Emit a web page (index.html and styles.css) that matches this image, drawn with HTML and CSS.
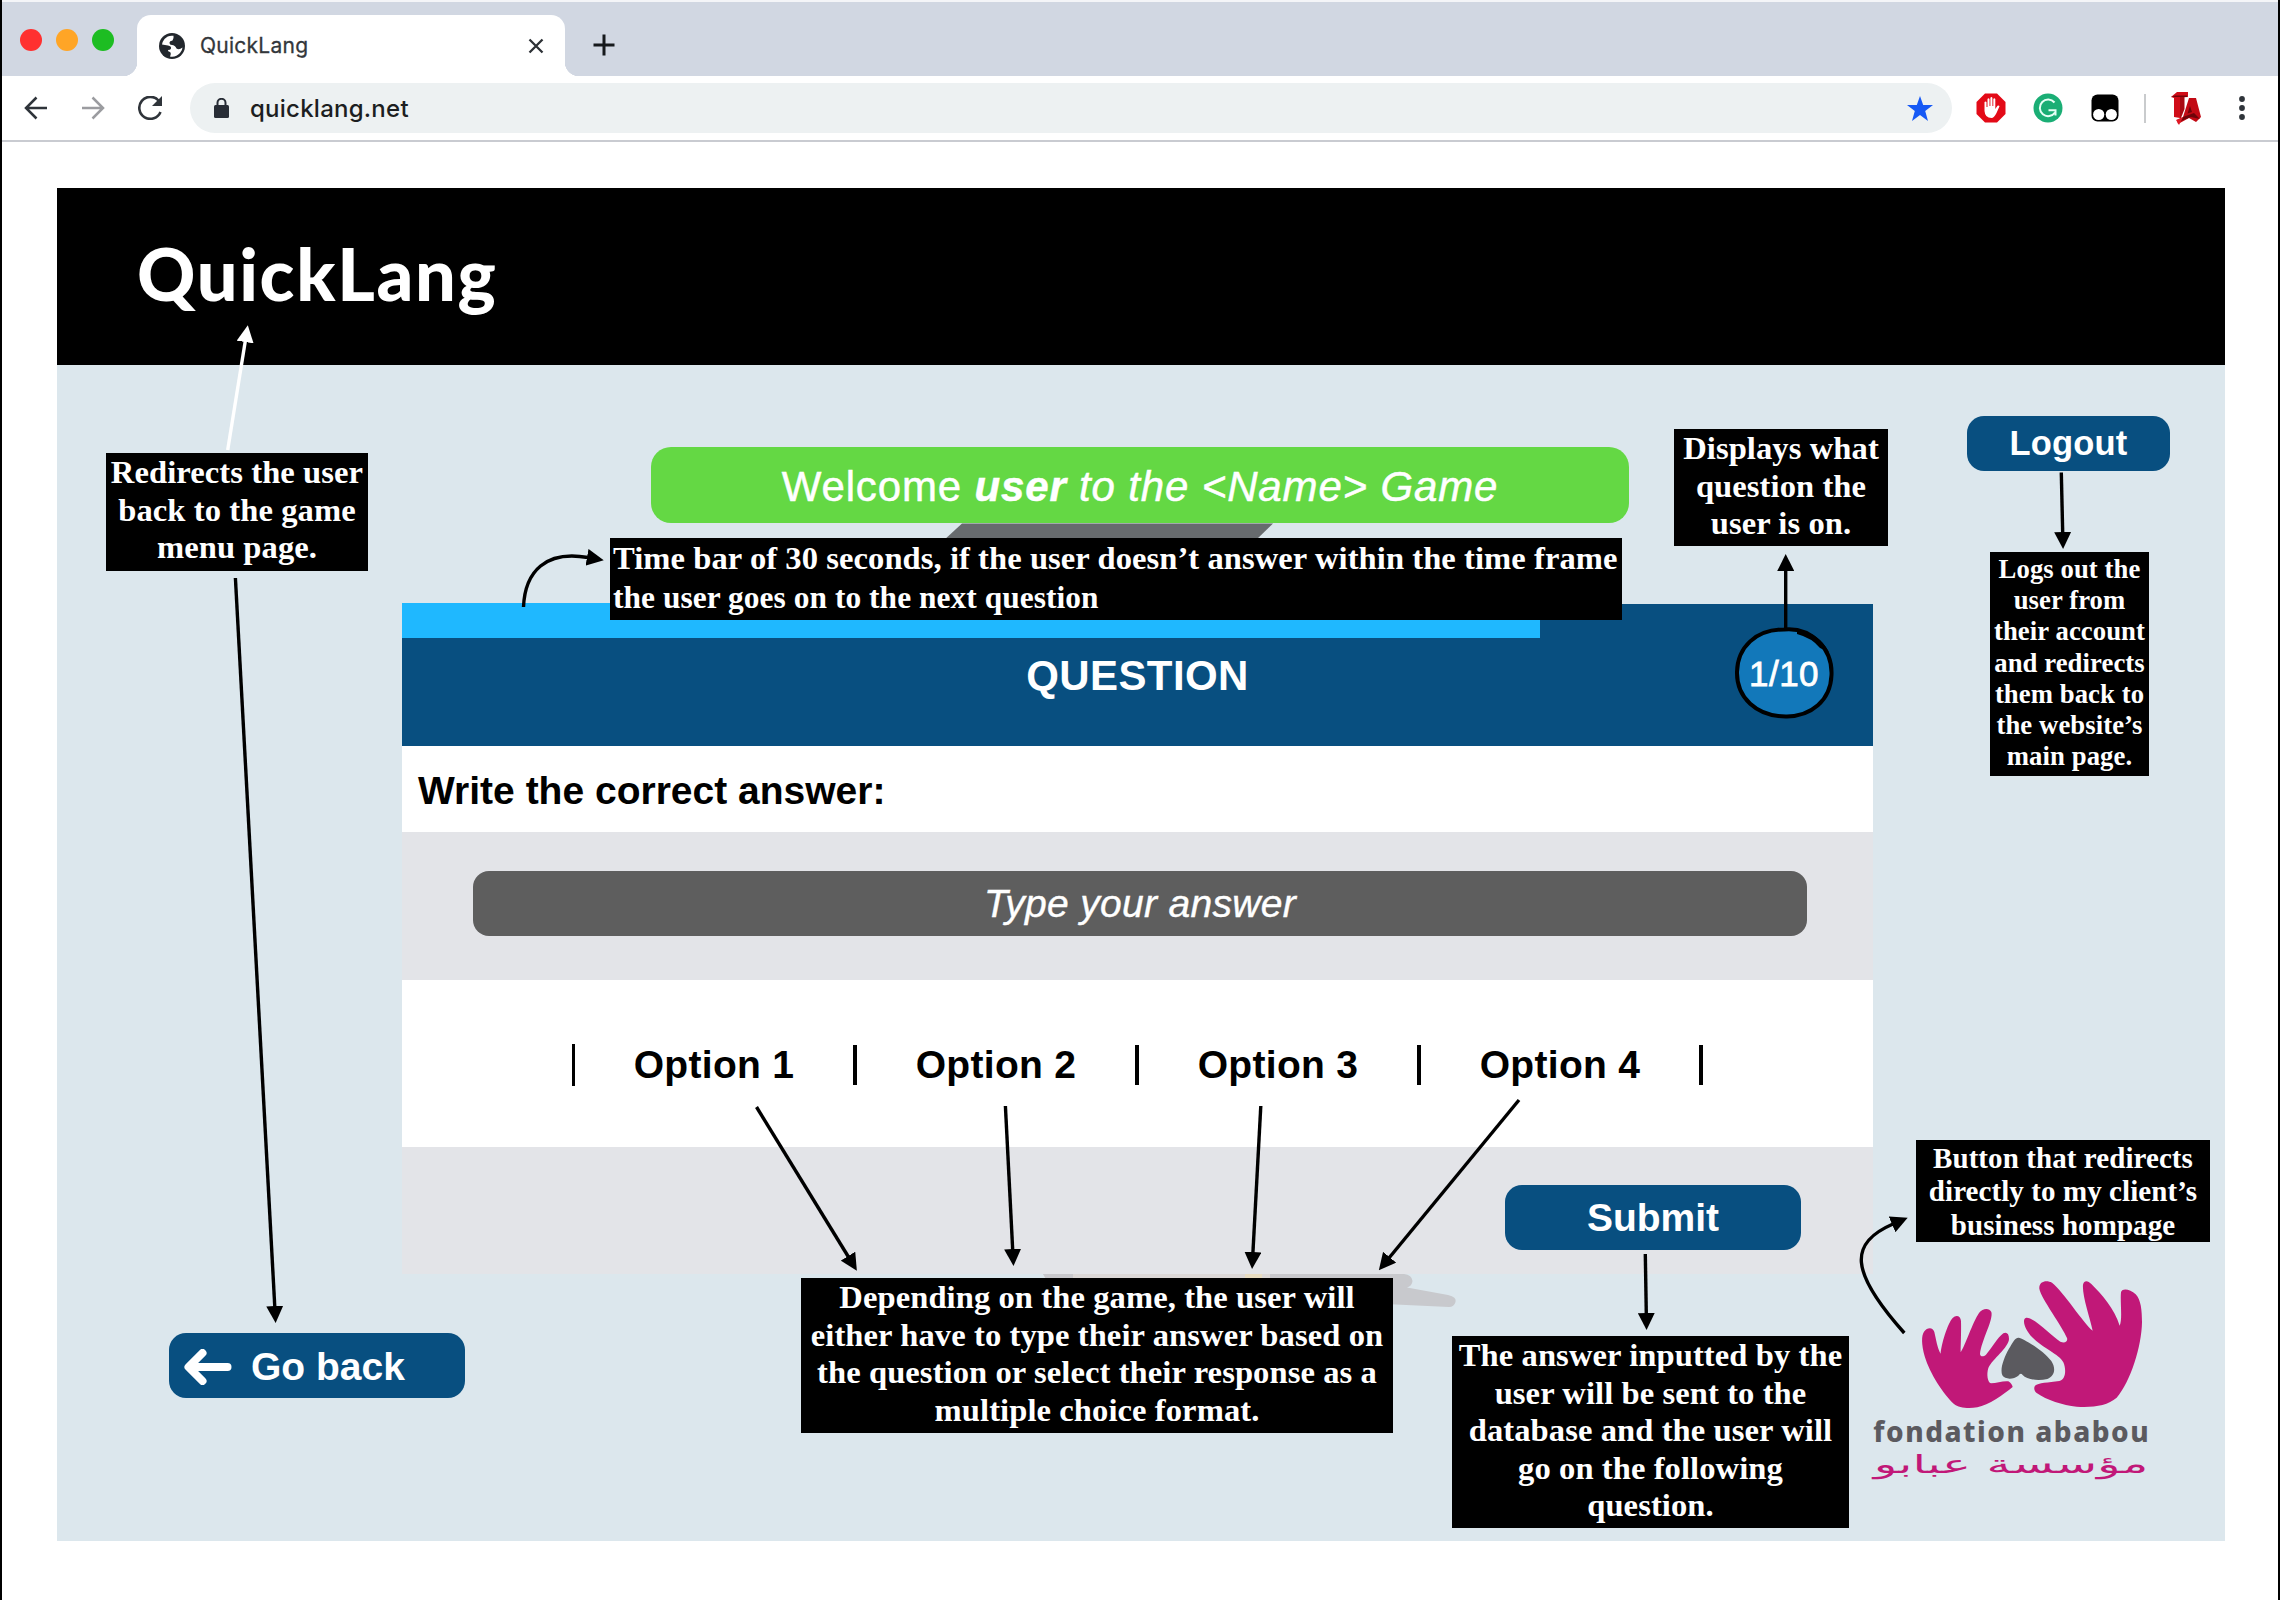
FILE: index.html
```html
<!DOCTYPE html>
<html lang="en">
<head>
<meta charset="utf-8">
<title>QuickLang</title>
<link rel="stylesheet" href="styles.css">
</head>
<body>
<div class="window">
  <div class="tabbar">
    <div class="lights"><i class="light red"></i><i class="light amber"></i><i class="light green"></i></div>
    <div class="tab">
      <svg class="globe" viewBox="0 0 26 26"><circle cx="13" cy="13" r="13" fill="#22272d"/><path d="M3 11.500L9 12.500Q12.500 13 12 15.500Q11.500 17 9 17Q8.500 18.500 11 19Q12.500 20 11 23.500Q17 24.500 21 20Q23.500 17 23.500 14.500Q20 17.500 17.500 15.500Q16 12 13 12Q10.500 12 10.500 9.500Q10.500 8 13.500 7.500Q15 5.500 14.500 2.800Q9 2 5.500 6Q3.500 8.500 3 11.500Z" fill="#fff"/></svg>
      <span class="tab-title">QuickLang</span>
      <svg class="close" viewBox="0 0 16 16"><path d="M1.500 1.500L14.500 14.500M14.500 1.500L1.500 14.500" stroke="#2d3136" stroke-width="2.300"/></svg>
    </div>
    <svg class="plus" viewBox="0 0 22 22"><path d="M11 0.500V21.500M0.500 11H21.500" stroke="#16191c" stroke-width="3"/></svg>
  </div>
  <div class="toolbar">
    <svg class="nav" viewBox="0 0 24 24"><path d="M23 12H2M12.500 1.500L2 12L12.500 22.500" fill="none" stroke="#2f343a" stroke-width="2.500"/></svg>
    <svg class="nav" viewBox="0 0 24 24"><path d="M1 12H22M11.500 1.500L22 12L11.500 22.500" fill="none" stroke="#9b9ca0" stroke-width="2.500"/></svg>
    <svg class="nav" viewBox="0 0 24 24"><path d="M20.500 4.500A11 11 0 1 0 22.500 16" fill="none" stroke="#2f343a" stroke-width="2.600"/><path d="M24 0V10H14Z" fill="#2f343a"/></svg>
    <div class="omnibox">
      <svg class="lock" viewBox="0 0 15 20"><rect x="0" y="7" width="15" height="13" rx="1.500" fill="#282d36"/><path d="M3.500 8V4.800a4 4 0 0 1 8 0V8" fill="none" stroke="#282d36" stroke-width="2"/></svg>
      <span class="url">quicklang.net</span>
      <svg class="star" viewBox="0 0 26 25"><path d="M13 0L16.200 9H26L18.200 15L21 25L13 19L5 25L7.800 15L0 9H9.800Z" fill="#1659f5"/></svg>
    </div>
    <div class="extensions">
      <svg class="ext" viewBox="0 0 30 30"><path d="M9 0.500H21L29.500 9V21L21 29.500H9L0.500 21V9Z" fill="#e30a17"/><path d="M8.500 9q1.200-1 2 0V14L11.500 14V6q1-1.500 2 0V13H14.400V4.800q1.100-1.500 2 0V13H17.300V6q1-1.500 2 0V16L21.500 12.700q1.500-.8 2 .5L20.500 20Q18 25 15.500 25Q9 25 8.500 18Z" fill="#fff"/></svg>
      <svg class="ext" viewBox="0 0 30 30"><circle cx="15" cy="15" r="14.500" fill="#1aae75"/><path d="M21.500 9.500A8.300 8.300 0 1 0 22 19.500M15.500 17.200H22.500V22.500" fill="none" stroke="#e6fff5" stroke-width="2"/></svg>
      <svg class="ext" viewBox="0 0 30 30"><rect x="1.500" y="1.500" width="27" height="27" rx="6" fill="#000"/><circle cx="8.700" cy="21.500" r="5.600" fill="#fff"/><circle cx="21.300" cy="21.500" r="5.600" fill="#fff"/></svg>
      <i class="divider"></i>
      <svg class="ta" viewBox="0 0 30 33"><path d="M0 5L6 0H17V5L9 5.500V26L3 25V6Z" fill="#d00d18"/><path d="M9 5H13.500V17L10 26H9Z" fill="#a80a12"/><path d="M0 5H16V3.500H4Z" fill="#75040a"/><path d="M18 6H25L30 25L25 30L18 26L7 32L6 28L12 25Z" fill="#c20a14"/><path d="M19 14L21 20L16.500 21.500ZM12 25L23 21L29 27L20 25L10 29Z" fill="#6d0409"/><path d="M5 28L12 25L8 33Z" fill="#e01824"/></svg>
      <svg class="dots" viewBox="0 0 6 26"><circle cx="3" cy="4" r="2.900"/><circle cx="3" cy="13" r="2.900"/><circle cx="3" cy="22" r="2.900"/></svg>
    </div>
  </div>
  <main class="page">
    <header class="masthead"><span class="brand">QuickLang</span></header>
    <div class="content">
      <div class="left">
        <div class="button back">
          <svg class="back-arrow" viewBox="0 0 48 36"><path d="M43.500 18H5M18.500 4L4.500 18L18.500 32" fill="none" stroke="#fff" stroke-width="8" stroke-linecap="round" stroke-linejoin="round"/></svg>
          <span>Go back</span>
        </div>
      </div>
      <div class="center">
        <div class="welcome"><span>Welcome <em><b>user</b> to the &lt;Name&gt; Game</em></span></div>
        <section class="panel">
          <div class="question">
            <div class="timebar"></div>
            <h1>QUESTION</h1>
          </div>
          <div class="prompt">Write the correct answer:</div>
          <div class="answer"><div class="field">Type your answer</div></div>
          <div class="options"><i class="bar thin"></i><span>Option 1</span><i class="bar"></i><span>Option 2</span><i class="bar"></i><span>Option 3</span><i class="bar"></i><span>Option 4</span><i class="bar"></i></div>
          <div class="actions"><div class="button submit">Submit</div></div>
        </section>
      </div>
      <div class="right">
        <div class="button logout">Logout</div>
        <svg class="logo" viewBox="0 0 900 660">
          <g fill="#c11878">
            <path d="M282 405C250 375 210 315 194 262C184 225 184 200 192 188C202 174 219 174 223 189C228 210 232 238 242 254C244 226 262 165 278 147C288 136 302 140 303 156C304 190 302 228 302 250C316 229 338 160 357 132C368 117 388 116 394 129C401 152 364 215 360 255C361 264 370 264 378 257C395 238 412 206 430 193C440 188 447 194 447 210C446 236 398 269 385 297C379 316 383 340 393 343C410 342 430 335 445 337C453 342 457 349 458 354C430 377 386 408 352 415C325 419 296 417 282 405Z"/>
            <path d="M525 350C535 341 565 341 598 336C618 332 619 300 610 280C598 255 548 238 516 204C496 183 485 153 497 147C518 141 572 199 601 218C616 225 624 215 621 207C608 173 543 88 538 59C536 36 560 32 576 41C612 70 668 160 698 185C689 143 666 80 669 47C673 31 685 36 694 45C724 74 764 120 779 170C788 151 780 98 783 69C788 56 811 61 827 76C843 92 846 125 846 160C845 230 812 339 770 386C742 410 700 416 650 413C608 409 560 393 530 372C522 366 521 356 525 350Z"/>
          </g>
          <path d="M476 206C490 208 551 245 574 276C588 298 585 320 562 330C534 336 500 332 488 318Q482 309 475 320C460 332 435 332 427 319C419 300 432 267 446 241C460 216 467 205 476 206Z" fill="#5b5a5f"/>
          <text class="logo-latin" x="40" y="520" textLength="826" lengthAdjust="spacing">fondation ababou</text>
          <text class="logo-arabic" x="453" y="612" textLength="824" lengthAdjust="spacingAndGlyphs" text-anchor="middle">مؤسسة عبابو</text>
        </svg>
      </div>
    </div>
  </main>

  <svg class="overlay" viewBox="0 0 2280 1600">
    <defs>
      <marker id="head" viewBox="0 0 17 17" refX="1" refY="8.500" markerWidth="17" markerHeight="17" markerUnits="userSpaceOnUse" orient="auto"><path d="M0 0L17 8.500L0 17Z"/></marker>
      <marker id="head-light" viewBox="0 0 17 17" refX="1" refY="8.500" markerWidth="17" markerHeight="17" markerUnits="userSpaceOnUse" orient="auto"><path d="M0 0L17 8.500L0 17Z" fill="#fff"/></marker>
    </defs>
    <path d="M962 523.500H1273L1255 541H943Z" fill="#676b6e"/>
    <path d="M1043 1274H1393V1279H1046Z" fill="#dbd7d6"/><path d="M1043 1274H1073V1279H1046ZM1270 1274H1393V1279H1270Z" fill="#c8c8cc"/><path d="M1245 1274H1262V1279H1245Z" fill="#e8dcc0"/>
    <path d="M1385 1274H1404Q1412 1275 1412.500 1281Q1412 1286 1407 1287.500L1448 1295Q1457 1297 1455.500 1302Q1454 1307 1449 1307L1385 1304Z" fill="#c8c9cd"/>
    <path class="badge" d="M1784 629.500C1799 628 1811 634 1819 642C1829 652 1832 663 1831.500 675C1830.500 701 1811 716 1787 716.500C1756 717 1736.500 697 1737 672C1737.500 647 1756 629.500 1784 629.500Z"/>
    <path d="M1797 630Q1818 632 1829 652L1820 648Q1812 638 1797 634Z"/>
    <text class="badge-text" x="1784" y="685.500" text-anchor="middle">1/10</text>
    <g class="arrows">
      <path class="light-arrow" d="M227.700 450L245.300 341"/>
      <path d="M235.400 578L274.800 1307"/>
      <path d="M523.500 607C525 571 546 550 588 557.500"/>
      <path d="M1785.700 629V570"/>
      <path d="M2061.300 472.500L2062.700 533"/>
      <path d="M756.500 1107L848.500 1257"/>
      <path d="M1005.400 1106L1012.700 1250"/>
      <path d="M1260.800 1106L1252.900 1253"/>
      <path d="M1519 1100L1389 1258"/>
      <path d="M1645.300 1254L1646.300 1314"/>
      <path d="M1904.300 1333C1849 1271 1849 1243 1893 1224"/>
    </g>
  </svg>

  <p class="note note-menu">Redirects the user<br>back to the game<br>menu page.</p>
  <p class="note note-time">Time bar of 30 seconds, if the user doesn’t answer within the time frame<br><span>the user goes on to the next question</span></p>
  <p class="note note-count">Displays what<br>question the<br>user is on.</p>
  <p class="note note-logout">Logs out the<br>user from<br>their account<br>and redirects<br>them back to<br>the website’s<br>main page.</p>
  <p class="note note-game">Depending on the game, the user will<br>either have to type their answer based on<br>the question or select their response as a<br>multiple choice format.</p>
  <p class="note note-submit">The answer inputted by the<br>user will be sent to the<br>database and the user will<br>go on the following<br>question.</p>
  <p class="note note-client">Button that redirects<br>directly to my client’s<br>business hompage</p>
</div>
</body>
</html>
```
FILE: styles.css
```css
* { box-sizing: border-box; }
body { margin: 0; font-family: "Liberation Sans", sans-serif; background: #fff; }
svg { display: block; flex: none; }
.window { position: relative; width: 2280px; height: 1600px; overflow: hidden; background: #fff; border-left: 2px solid #000; border-right: 2px solid #000; display: flex; flex-direction: column; }

.tabbar { height: 76px; flex: none; background: #d1d7e2; border-top: 2px solid #f4f5f8; display: flex; align-items: flex-end; padding-left: 18px; }
.lights { display: flex; gap: 14px; width: 117px; align-self: flex-start; padding-top: 27px; }
.light { width: 22px; height: 22px; border-radius: 50%; }
.red { background: #ff3030; }
.amber { background: #ffa526; }
.green { background: #1dbd22; }
.tab { position: relative; width: 428px; height: 61px; background: #fff; border-radius: 14px 14px 0 0; display: flex; align-items: center; padding: 0 21px 0 22px; }
.tab::before, .tab::after { content: ""; position: absolute; bottom: 0; width: 14px; height: 14px; }
.tab::before { left: -14px; background: radial-gradient(circle at 0 0, transparent 14px, #fff 14.5px); }
.tab::after { right: -14px; background: radial-gradient(circle at 100% 0, transparent 14px, #fff 14.5px); }
.globe { width: 26px; height: 26px; }
.tab-title { font: 21px/26px Inter, sans-serif; color: #33373b; margin-left: 15px; letter-spacing: 0.25px; flex: 1; -webkit-text-stroke: 0.3px #33373b; }
.close { width: 16px; height: 16px; }
.plus { width: 22px; height: 22px; margin: 0 0 20px 28px; }

.toolbar { height: 66px; flex: none; border-bottom: 2px solid #c9cbd1; display: flex; align-items: center; padding: 0 33px 0 22px; }
.nav { width: 24px; height: 24px; margin-right: 33px; }
.nav:nth-child(3) { margin: 0 28px 0 0; }
.omnibox { width: 1762px; height: 50px; flex: none; border-radius: 25px; background: #edf1f2; display: flex; align-items: center; padding: 0 19px 0 24px; }
.lock { width: 15px; height: 20px; }
.url { font: 500 24px/30px Inter, sans-serif; color: #1c1e21; margin-left: 21px; padding-top: 1px; flex: 1; letter-spacing: 0.25px; }
.star { width: 26px; height: 25px; }
.extensions { display: flex; align-items: center; flex: 1; margin-left: 24px; }
.ext { width: 30px; height: 30px; margin-right: 27px; }
.divider { width: 2px; height: 29px; background: #c9cbcd; margin-left: -3px; }
.ta { width: 30px; height: 33px; margin-left: 25px; }
.dots { width: 6px; height: 26px; margin-left: 38px; fill: #2f343a; }

.page { width: 2168px; margin: 46px 0 0 55px; flex: none; }
.masthead { height: 177px; background: #000; color: #fff; padding: 42px 0 0 80px; }
.brand { display: block; font: 900 72px/86px Lato, sans-serif; letter-spacing: 1.7px; white-space: nowrap; }
.content { height: 1176px; background: #dce7ed; display: grid; grid-template-columns: 345px 1471px 352px; }
.left { display: flex; flex-direction: column; justify-content: flex-end; padding: 0 0 143px 112px; }
.button { background: #084f80; color: #fff; font-weight: bold; font-size: 39px; border-radius: 17px; height: 65px; width: 296px; display: flex; align-items: center; justify-content: center; white-space: nowrap; }
.back { justify-content: flex-start; padding: 2px 0 0 15px; gap: 19px; }
.back-arrow { width: 48px; height: 36px; }
.center { display: flex; flex-direction: column; }
.welcome { margin: 82px 0 0 249px; width: 978px; height: 76px; border-radius: 20px; background: #64d844; color: #fff; font-size: 42px; display: flex; align-items: center; justify-content: center; padding: 3px 0 0; white-space: nowrap; letter-spacing: 0.85px; -webkit-text-stroke: 0.5px #fff; }
.panel { margin-top: 81px; display: flex; flex-direction: column; background: #fff; }
.question { height: 142px; background: #084f80; }
.timebar { width: 1138px; height: 35px; margin-top: -1px; background: #1fb8ff; }
.question h1 { margin: 14px 0 0; color: #fff; text-align: center; font-size: 42px; line-height: 48px; letter-spacing: 0.4px; }
.prompt { height: 86px; padding: 0 0 0 16px; font-weight: bold; font-size: 39px; line-height: 89px; }
.answer { height: 148px; background: #e3e4e8; padding: 39px 66px 0 71px; }
.field { height: 65px; border-radius: 16px; background: #5e5e5e; color: #fff; font-style: italic; font-size: 39px; line-height: 66px; text-align: center; letter-spacing: 0.3px; -webkit-text-stroke: 0.4px #fff; }
.options { height: 167px; display: flex; align-items: center; padding: 2px 0 0 170px; font-weight: bold; font-size: 39px; letter-spacing: 0.3px; }
.options span { width: 278px; text-align: center; }
.bar { width: 4px; height: 40px; background: #000; }
.thin { width: 3px; height: 42px; }
.actions { height: 127px; background: #e3e4e8; display: flex; justify-content: flex-end; padding: 38px 72px 0 0; }
.right { display: flex; flex-direction: column; justify-content: space-between; padding: 51px 0 52px; }
.logout { width: 203px; height: 55px; margin-left: 94px; font-size: 34.5px; letter-spacing: 0.2px; }
.logo { width: 300px; height: 220px; margin-left: -13px; }
.logo-latin { font: 800 84px "Noto Sans", "Open Sans", sans-serif; font-variant-ligatures: none; fill: #5b5a5f; }
.logo-arabic { font: 76px "DejaVu Sans", sans-serif; fill: #c11878; }

.overlay { position: absolute; left: -2px; top: 0; width: 2280px; height: 1600px; }
.arrows path { fill: none; stroke: #000; stroke-width: 3.4; marker-end: url(#head); }
.arrows .light-arrow { stroke: #fff; marker-end: url(#head-light); }
.badge { fill: #1278ba; stroke: #000; stroke-width: 4; }
.badge-text { font: 35px "Liberation Sans", sans-serif; fill: #fff; stroke: #fff; stroke-width: 0.8px; letter-spacing: 0.5px; }

.note { position: absolute; margin: 0; background: #000; color: #fff; font: bold 32.6px/37.5px "Liberation Serif", serif; letter-spacing: 0.08px; text-align: center; white-space: nowrap; padding-top: 1px; }
.note-menu { left: 104px; top: 453px; width: 262px; height: 118px; }
.note-time { left: 608px; top: 538px; width: 1012px; height: 82px; padding: 1px 0 0 3px; text-align: left; line-height: 39px; letter-spacing: 0.06px; }
.note-time span { font-size: 31.4px; }
.note-count { left: 1672px; top: 429px; width: 214px; height: 117px; }
.note-logout { left: 1988px; top: 552px; width: 159px; height: 224px; font-size: 26.7px; line-height: 31.2px; padding-top: 2px; }
.note-game { left: 799px; top: 1278px; width: 592px; height: 155px; }
.note-submit { left: 1450px; top: 1336px; width: 397px; height: 192px; }
.note-client { left: 1914px; top: 1140px; width: 294px; height: 102px; font-size: 29px; line-height: 33.4px; padding-top: 2px; }
```
